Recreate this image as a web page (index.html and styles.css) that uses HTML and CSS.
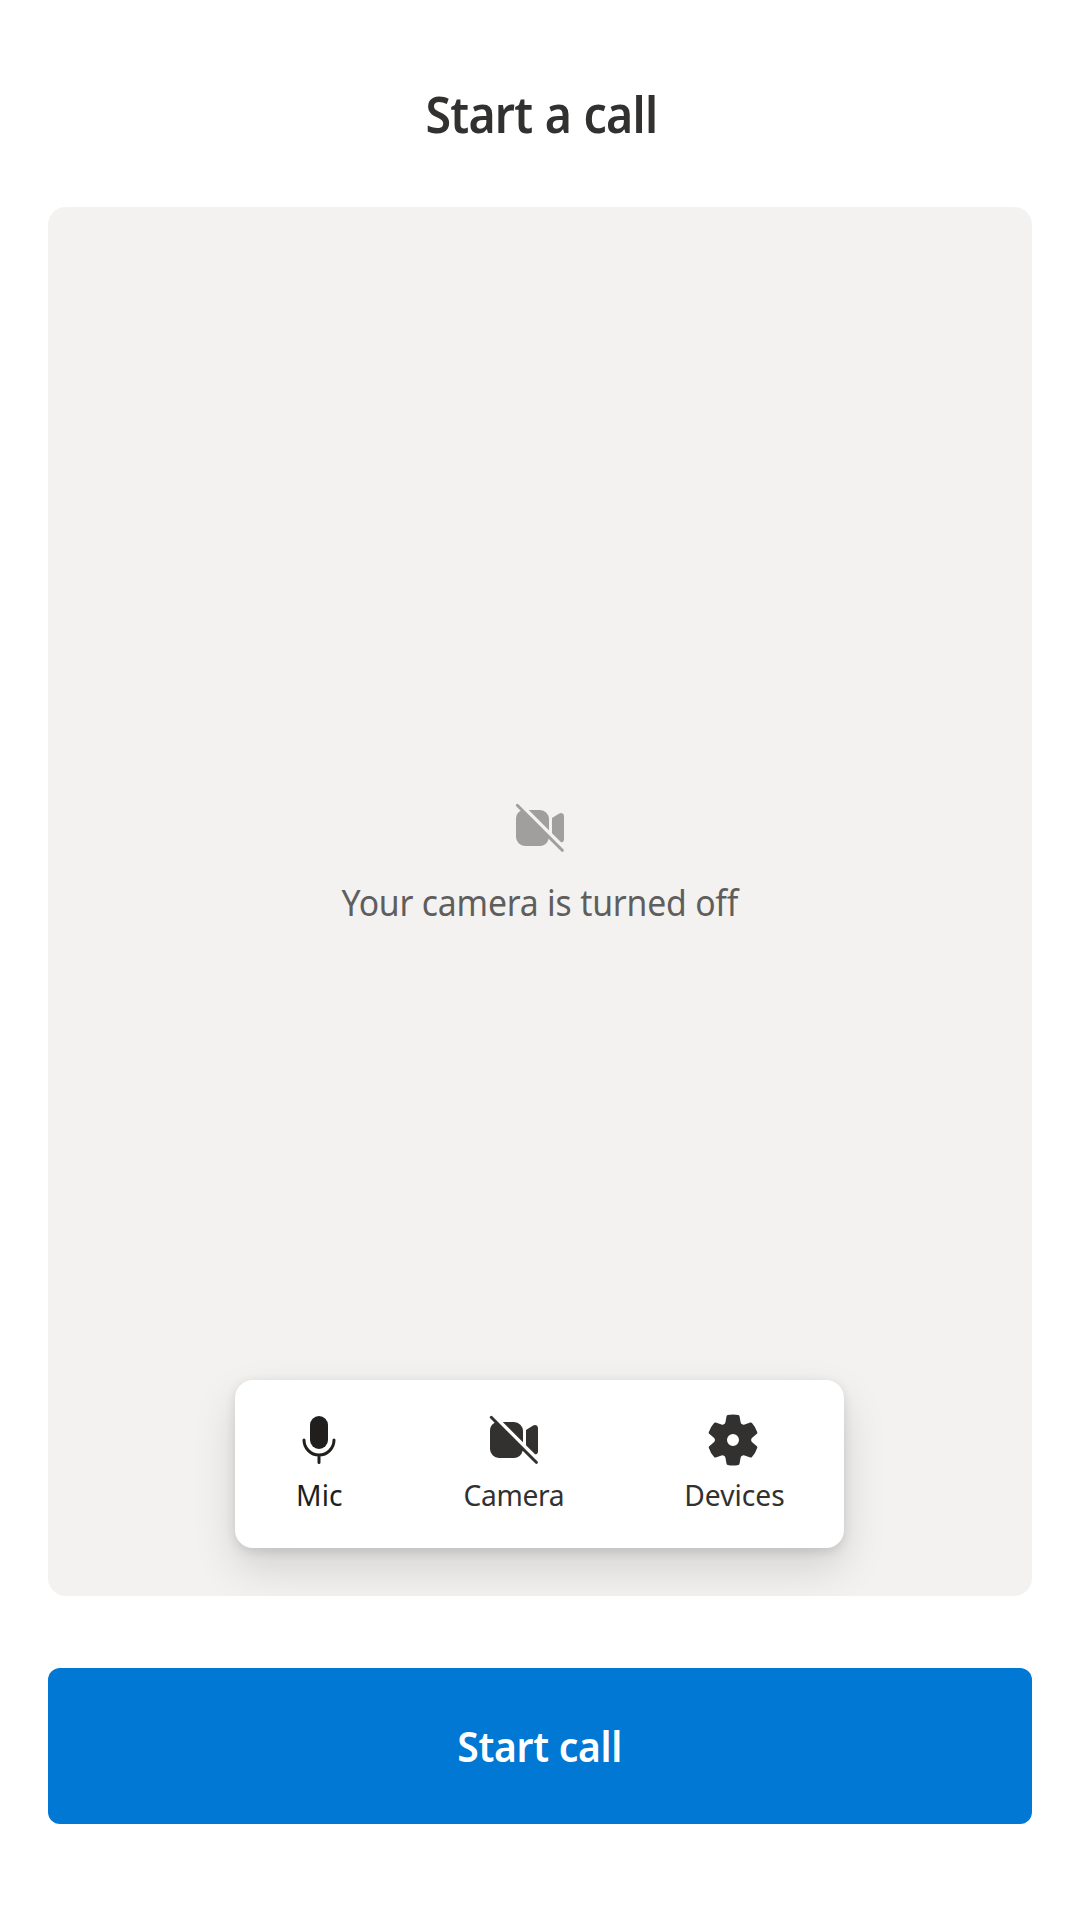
FILE: index.html
```html
<!DOCTYPE html>
<html lang="en">
<head>
<meta charset="utf-8">
<title>Start a call</title>
<link rel="stylesheet" href="styles.css">
</head>
<body>
<svg class="sprite" aria-hidden="true">
  <symbol id="video-off" viewBox="0 0 20 20">
    <path d="M2.85 2.15a.5.5 0 1 0-.7.7l1.4 1.4A3 3 0 0 0 2 7v6a3 3 0 0 0 3 3h5a3 3 0 0 0 2.88-2.41l4.27 4.26a.5.5 0 0 0 .7-.7l-15-15zM6.24 4 13 10.76V7a3 3 0 0 0-3-3H6.24zM14 6.7v5.06l3.02 3.02c.5 0 .98-.35.98-.98V6.05c0-.85-.94-1.33-1.6-.85L14 6.7z"/>
  </symbol>
</svg>
<main class="page">
  <h1 class="title">Start a call</h1>
  <section class="preview">
    <div class="placeholder">
      <svg class="icon" viewBox="0 0 20 20"><use href="#video-off"/></svg>
      <p class="message">Your camera is turned off</p>
    </div>
    <div class="controls">
      <button class="control control-mic">
        <svg class="icon" viewBox="0 0 20 20"><rect x="7" y="2" width="6" height="11" rx="3"/><path class="line" d="M5 10a5 5 0 0 0 10 0M10 15v2.5"/></svg>
        <span class="label">Mic</span>
      </button>
      <button class="control control-camera">
        <svg class="icon" viewBox="0 0 20 20"><use href="#video-off"/></svg>
        <span class="label">Camera</span>
      </button>
      <button class="control control-devices">
        <svg class="icon" viewBox="0 0 20 20"><path d="M1.91 7.38A8.5 8.5 0 0 1 3.7 4.3a.5.5 0 0 1 .54-.13l1.92.68a1 1 0 0 0 1.32-.76l.36-2a.5.5 0 0 1 .4-.4 8.53 8.53 0 0 1 3.55 0c.2.04.35.2.38.4l.37 2a1 1 0 0 0 1.32.76l1.92-.68a.5.5 0 0 1 .54.13 8.5 8.5 0 0 1 1.78 3.08c.06.2 0 .4-.15.54l-1.56 1.32a1 1 0 0 0 0 1.52l1.56 1.32a.5.5 0 0 1 .15.54 8.5 8.5 0 0 1-1.78 3.08.5.5 0 0 1-.54.13l-1.92-.68a1 1 0 0 0-1.32.76l-.37 2a.5.5 0 0 1-.38.4 8.53 8.53 0 0 1-3.56 0 .5.5 0 0 1-.39-.4l-.36-2a1 1 0 0 0-1.32-.76l-1.92.68a.5.5 0 0 1-.54-.13 8.5 8.5 0 0 1-1.78-3.08.5.5 0 0 1 .15-.54l1.56-1.32a1 1 0 0 0 0-1.52L2.06 7.92a.5.5 0 0 1-.15-.54ZM8 10a2 2 0 1 0 4 0 2 2 0 0 0-4 0Z"/></svg>
        <span class="label">Devices</span>
      </button>
    </div>
  </section>
  <button class="start"><span class="start-label">Start call</span></button>
</main>
</body>
</html>
```
FILE: styles.css
```css
* { box-sizing: border-box; margin: 0; }
body {
  background: #fff;
  color: #323130;
  font-family: "Noto Sans", "Open Sans", sans-serif;
}
button { border: 0; padding: 0; background: none; font: inherit; color: inherit; }
.sprite { display: none; }
.page {
  display: flex;
  flex-direction: column;
  height: 1920px;
  padding: 80px 48px 96px;
}
.title {
  height: 68px;
  margin-bottom: 59px;
  padding-left: 3px;
  font-size: 50px;
  font-weight: 600;
  line-height: 68px;
  letter-spacing: -0.8px;
  word-spacing: 1px;
  text-align: center;
  transform: scaleX(0.93);
}
.preview {
  display: flex;
  flex-direction: column;
  align-items: center;
  justify-content: space-between;
  height: 1389px;
  margin-bottom: 72px;
  padding: 591px 0 48px;
  border-radius: 18px;
  background: #f3f2f1;
  overflow: hidden;
}
.placeholder {
  display: flex;
  flex-direction: column;
  align-items: center;
  gap: 20px;
  color: #605e5c;
}
.icon { display: block; width: 60px; height: 60px; fill: currentColor; }
.placeholder .icon { color: #a19f9d; }
.line { fill: none; stroke: currentColor; stroke-width: 1; stroke-linecap: round; }
.message {
  font-size: 35.5px;
  line-height: 48px;
  letter-spacing: -0.2px;
  transform: scaleX(0.95);
}
.controls {
  display: grid;
  grid-template-columns: 168px 222px 216px;
  width: 609px;
  height: 168px;
  margin-right: 1px;
  border-radius: 18px;
  background: #fff;
  box-shadow: 0 19.2px 43.2px rgba(0, 0, 0, 0.132), 0 3.6px 10.8px rgba(0, 0, 0, 0.108);
}
.control {
  display: flex;
  flex-direction: column;
  align-items: center;
  gap: 5px;
  padding-top: 30px;
}
.control-mic { color: #201f1e; }
.label { font-size: 29.5px; line-height: 40px; transform: scaleX(0.955); }
.control-camera .label { letter-spacing: -0.3px; }
.control-devices .label { padding-left: 4px; }
.start {
  height: 156px;
  padding-bottom: 2px;
  border-radius: 12px;
  background: #0078d4;
  color: #fff;
  font-size: 42px;
  font-weight: 600;
  letter-spacing: -0.3px;
}
.start-label { display: inline-block; transform: scaleX(0.93); }
```
